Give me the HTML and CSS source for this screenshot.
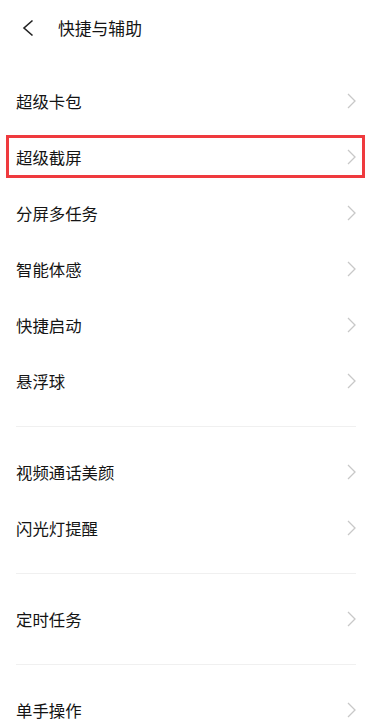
FILE: index.html
```html
<!DOCTYPE html>
<html lang="zh">
<head>
<meta charset="utf-8">
<link rel="stylesheet" href="styles.css">
</head>
<body>
<div class="page">
  <header class="header">
    <svg class="back" width="12" height="18" viewBox="0 0 12 18"><polyline points="10.5,1.5 2,9 10.5,16.5" fill="none" stroke="#222" stroke-width="1.6" stroke-linejoin="miter"/></svg>
    <h1 class="title">快捷与辅助</h1>
  </header>
  <section class="group first">
    <div class="row"><span class="label">超级卡包</span><svg class="chev" width="9" height="16" viewBox="0 0 9 16"><polyline points="1,1 8,8 1,15" fill="none" stroke="#c8c8c8" stroke-width="1.3"/></svg></div>
    <div class="row highlighted"><span class="label">超级截屏</span><svg class="chev" width="9" height="16" viewBox="0 0 9 16"><polyline points="1,1 8,8 1,15" fill="none" stroke="#c8c8c8" stroke-width="1.3"/></svg><span class="mark"></span></div>
    <div class="row"><span class="label">分屏多任务</span><svg class="chev" width="9" height="16" viewBox="0 0 9 16"><polyline points="1,1 8,8 1,15" fill="none" stroke="#c8c8c8" stroke-width="1.3"/></svg></div>
    <div class="row"><span class="label">智能体感</span><svg class="chev" width="9" height="16" viewBox="0 0 9 16"><polyline points="1,1 8,8 1,15" fill="none" stroke="#c8c8c8" stroke-width="1.3"/></svg></div>
    <div class="row"><span class="label">快捷启动</span><svg class="chev" width="9" height="16" viewBox="0 0 9 16"><polyline points="1,1 8,8 1,15" fill="none" stroke="#c8c8c8" stroke-width="1.3"/></svg></div>
    <div class="row"><span class="label">悬浮球</span><svg class="chev" width="9" height="16" viewBox="0 0 9 16"><polyline points="1,1 8,8 1,15" fill="none" stroke="#c8c8c8" stroke-width="1.3"/></svg></div>
  </section>
  <div class="sep"></div>
  <section class="group">
    <div class="row"><span class="label">视频通话美颜</span><svg class="chev" width="9" height="16" viewBox="0 0 9 16"><polyline points="1,1 8,8 1,15" fill="none" stroke="#c8c8c8" stroke-width="1.3"/></svg></div>
    <div class="row"><span class="label">闪光灯提醒</span><svg class="chev" width="9" height="16" viewBox="0 0 9 16"><polyline points="1,1 8,8 1,15" fill="none" stroke="#c8c8c8" stroke-width="1.3"/></svg></div>
  </section>
  <div class="sep"></div>
  <section class="group">
    <div class="row"><span class="label">定时任务</span><svg class="chev" width="9" height="16" viewBox="0 0 9 16"><polyline points="1,1 8,8 1,15" fill="none" stroke="#c8c8c8" stroke-width="1.3"/></svg></div>
  </section>
  <div class="sep"></div>
  <section class="group">
    <div class="row"><span class="label">单手操作</span><svg class="chev" width="9" height="16" viewBox="0 0 9 16"><polyline points="1,1 8,8 1,15" fill="none" stroke="#c8c8c8" stroke-width="1.3"/></svg></div>
  </section>
</div>
</body>
</html>
```

FILE: styles.css
```css
* { box-sizing: border-box; }
html, body {
  margin: 0;
  padding: 0;
  background: #ffffff;
}
body {
  font-family: "Noto Sans CJK SC", "Noto Sans", sans-serif;
  color: #1c1c1c;
  width: 372px;
  height: 728px;
  overflow: hidden;
}
.page {
  display: flex;
  flex-direction: column;
}
.header {
  height: 56px;
  display: flex;
  align-items: center;
  padding-left: 22px;
}
.back {
  display: block;
  margin-right: 24px;
}
.title {
  margin: 0;
  font-size: 16.8px;
  font-weight: 400;
  line-height: 1;
  color: #141414;
}
.group.first {
  margin-top: 17px;
}
.row {
  position: relative;
  height: 56px;
  display: flex;
  align-items: center;
  justify-content: space-between;
  padding: 0 16px 0 16px;
}
.label {
  font-size: 16.4px;
  line-height: 1;
  color: #141414;
}
.chev {
  display: block;
}
.mark {
  position: absolute;
  left: 6px;
  right: 7px;
  top: 6px;
  bottom: 7px;
  border: 3px solid #ef3a3e;
  pointer-events: none;
}
.sep {
  height: 1px;
  margin: 17px 16px;
  background: #f0f0f0;
}
```
